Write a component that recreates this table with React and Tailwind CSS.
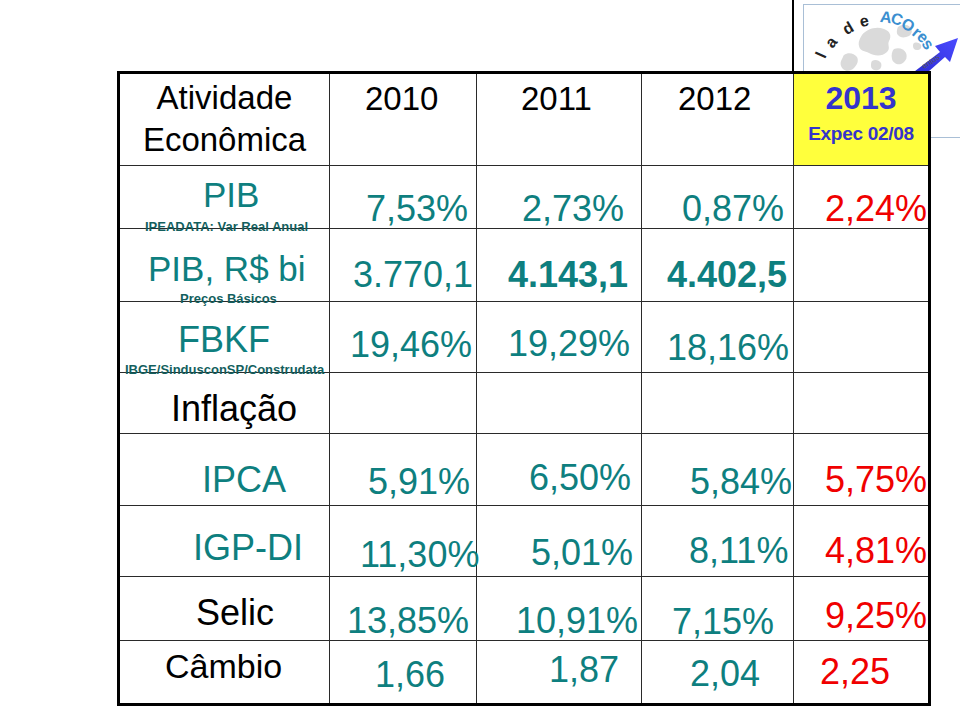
import React from 'react'

// letters of the logo arc: [char, x, y, rotate, colour]
const ARC = [
  ['l', 17, 50, -66, '#222'],
  ['a', 27, 37, -51, '#222'],
  ['d', 44, 23, -30, '#222'],
  ['e', 60, 16, -13, '#222'],
  ['A', 82, 12, 8, '#3b8fd0'],
  ['C', 93, 14, 18, '#3b8fd0'],
  ['O', 104, 20, 29, '#3b8fd0'],
  ['r', 113, 27, 40, '#3b8fd0'],
  ['e', 119, 32, 47, '#3b8fd0'],
  ['s', 124, 39, 54, '#3b8fd0'],
]

function Logo() {
  return (
    <div className="absolute left-[803px] top-[4px] w-[180px] h-[134px] border border-[#a9bfd6] bg-white">
      <svg width="157" height="134" viewBox="0 0 157 134">
        <defs>
          <linearGradient id="arr" x1="0" y1="1" x2="1" y2="0">
            <stop offset="0" stopColor="#2323c8" />
            <stop offset="1" stopColor="#4a4aff" />
          </linearGradient>
        </defs>
        <g fill="#dadada">
          <path d="M58 30c5-6 14-9 22-6 6 2 8 7 5 12-2 4 2 7-2 11-5 5-13 4-18 1-4-2-9-2-10-7-1-4 1-8 3-11z" />
          <path d="M40 50c4-3 10-2 13 2 2 4 0 8-3 11-3 3-8 4-11 1-3-3-3-7-1-10 1-2 1-3 2-4z" />
          <path d="M94 22c4-3 9-3 12 0 3 3 2 7-1 9-4 2-9 2-11-1-2-2-1-6 0-8z" />
          <path d="M90 44c5-2 10 0 12 4 2 5-1 9-5 11-4 1-8-1-9-5-1-4 0-8 2-10z" />
          <path d="M68 56c3-2 7-1 9 2 1 3 0 6-3 7-4 1-7-1-7-4 0-2 0-4 1-5z" />
          <path d="M110 38c3-1 6 0 7 2 1 3-1 5-4 5-3 0-4-2-4-4 0-1 0-2 1-3z" />
        </g>
        {ARC.map(([c, x, y, r, col], i) => (
          <text key={i} x={x} y={y} fill={col} fontSize="16" fontWeight="bold"
            fontFamily="'Liberation Sans', Arial, sans-serif" textAnchor="middle"
            dominantBaseline="central" transform={`rotate(${r} ${x} ${y})`}>{c}</text>
        ))}
        <polygon points="98,76 136,47 131,41 154,33 146,57 141,52 107,82" fill="url(#arr)" />
        <text x="120" y="64" fill="#555" fontSize="8" fontFamily="'Liberation Sans', Arial, sans-serif"
          transform="rotate(-33 120 64)">entos</text>
      </svg>
    </div>
  )
}

const V = 'text-[36px] leading-none whitespace-nowrap'
const TEAL = 'text-[#0e7f7f]'
const RED = 'text-[#f00000]'
const SUB = 'text-[13px] leading-none font-bold whitespace-nowrap text-[#135f5e]'

function Cell({ children, last, bottom, className = '' }) {
  return (
    <div className={`${last ? '' : 'border-r'} ${bottom ? '' : 'border-b'} border-[#2a2a2a] ${className}`}>
      {children}
    </div>
  )
}

export default function App() {
  return (
    <div className="relative w-[960px] h-[720px] overflow-hidden bg-white font-['Liberation_Sans',Arial,sans-serif]">
      <Logo />
      <div className="relative z-10 h-[71px]">
        <div className="ml-[792px] h-full w-[2px] bg-black" />
      </div>

      <div className="relative z-10 ml-[117px] w-[814px] border-[3px] border-black bg-white grid grid-cols-[210px_147px_165px_152px_134px] grid-rows-[92px_63px_73px_71px_61px_72px_71px_64px_62px]">
        {/* header */}
        <Cell className="pt-[3px]"><p className="text-center text-[33px] leading-[42px] text-black">Atividade<br />Econômica</p></Cell>
        <Cell className="pl-[35px] pt-[8px]"><p className="text-[33px] leading-none">2010</p></Cell>
        <Cell className="pl-[44px] pt-[8px]"><p className="text-[33px] leading-none">2011</p></Cell>
        <Cell className="pl-[36px] pt-[8px]"><p className="text-[33px] leading-none">2012</p></Cell>
        <Cell last className="bg-[#ffff3c] pt-[8px] text-center text-[#3434cc] font-bold">
          <p className="text-[32px] leading-none">2013</p>
          <p className="mt-[10px] text-[19px] leading-none tracking-[-0.3px]">Expec 02/08</p>
        </Cell>

        {/* PIB */}
        <Cell className="pt-[11px]">
          <p className={`pl-[83px] text-[35px] leading-none ${TEAL}`}>PIB</p>
          <p className={`mt-[8px] pl-[25px] ${SUB}`}>IPEADATA: Var Real Anual</p>
        </Cell>
        <Cell className="pl-[36px] pt-[25px]"><p className={`${V} ${TEAL}`}>7,53%</p></Cell>
        <Cell className="pl-[45px] pt-[25px]"><p className={`${V} ${TEAL}`}>2,73%</p></Cell>
        <Cell className="pl-[40px] pt-[25px]"><p className={`${V} ${TEAL}`}>0,87%</p></Cell>
        <Cell last className="pl-[31px] pt-[25px]"><p className={`${V} ${RED}`}>2,24%</p></Cell>

        {/* PIB, R$ bi */}
        <Cell className="pt-[22px]">
          <p className={`pl-[28px] text-[35px] leading-none whitespace-nowrap ${TEAL}`}>PIB, R$ bi</p>
          <p className={`mt-[6px] pl-[60px] ${SUB}`}>Preços Básicos</p>
        </Cell>
        <Cell className="pl-[23px] pt-[28px]"><p className={`${V} ${TEAL}`}>3.770,1</p></Cell>
        <Cell className="pl-[31px] pt-[28px]"><p className={`${V} ${TEAL} font-bold`}>4.143,1</p></Cell>
        <Cell className="pl-[25px] pt-[28px]"><p className={`${V} ${TEAL} font-bold`}>4.402,5</p></Cell>
        <Cell last />

        {/* FBKF */}
        <Cell className="pt-[20px]">
          <p className={`pl-[58px] ${V} ${TEAL}`}>FBKF</p>
          <p className={`mt-[5px] pl-[5px] ${SUB}`}>IBGE/SindusconSP/Construdata</p>
        </Cell>
        <Cell className="pl-[20px] pt-[25px]"><p className={`${V} ${TEAL}`}>19,46%</p></Cell>
        <Cell className="pl-[31px] pt-[24px]"><p className={`${V} ${TEAL}`}>19,29%</p></Cell>
        <Cell className="pl-[25px] pt-[28px]"><p className={`${V} ${TEAL}`}>18,16%</p></Cell>
        <Cell last />

        {/* Inflação */}
        <Cell className="pl-[51px] pt-[18px]"><p className={`${V} text-black`}>Inflação</p></Cell>
        <Cell />
        <Cell />
        <Cell />
        <Cell last />

        {/* IPCA */}
        <Cell className="pl-[82px] pt-[28px]"><p className={`${V} ${TEAL}`}>IPCA</p></Cell>
        <Cell className="pl-[38px] pt-[30px]"><p className={`${V} ${TEAL}`}>5,91%</p></Cell>
        <Cell className="pl-[52px] pt-[26px]"><p className={`${V} ${TEAL}`}>6,50%</p></Cell>
        <Cell className="pl-[48px] pt-[30px]"><p className={`${V} ${TEAL}`}>5,84%</p></Cell>
        <Cell last className="pl-[31px] pt-[28px]"><p className={`${V} ${RED}`}>5,75%</p></Cell>

        {/* IGP-DI */}
        <Cell className="pl-[73px] pt-[24px]"><p className={`${V} ${TEAL}`}>IGP-DI</p></Cell>
        <Cell className="pl-[30px] pt-[31px]"><p className={`${V} ${TEAL}`}>11,30%</p></Cell>
        <Cell className="pl-[54px] pt-[29px]"><p className={`${V} ${TEAL}`}>5,01%</p></Cell>
        <Cell className="pl-[47px] pt-[27px]"><p className={`${V} ${TEAL}`}>8,11%</p></Cell>
        <Cell last className="pl-[31px] pt-[27px]"><p className={`${V} ${RED}`}>4,81%</p></Cell>

        {/* Selic */}
        <Cell className="pl-[76px] pt-[18px]"><p className={`${V} text-black`}>Selic</p></Cell>
        <Cell className="pl-[17px] pt-[26px]"><p className={`${V} ${TEAL}`}>13,85%</p></Cell>
        <Cell className="pl-[39px] pt-[26px]"><p className={`${V} ${TEAL}`}>10,91%</p></Cell>
        <Cell className="pl-[30px] pt-[27px]"><p className={`${V} ${TEAL}`}>7,15%</p></Cell>
        <Cell last className="pl-[31px] pt-[21px]"><p className={`${V} ${RED}`}>9,25%</p></Cell>

        {/* Câmbio */}
        <Cell bottom className="pl-[45px] pt-[8px]"><p className="text-[34px] leading-none text-black">Câmbio</p></Cell>
        <Cell bottom className="pl-[45px] pt-[16px]"><p className={`${V} ${TEAL}`}>1,66</p></Cell>
        <Cell bottom className="pl-[72px] pt-[11px]"><p className={`${V} ${TEAL}`}>1,87</p></Cell>
        <Cell bottom className="pl-[48px] pt-[15px]"><p className={`${V} ${TEAL}`}>2,04</p></Cell>
        <Cell bottom last className="pl-[26px] pt-[13px]"><p className={`${V} ${RED}`}>2,25</p></Cell>
      </div>
    </div>
  )
}
